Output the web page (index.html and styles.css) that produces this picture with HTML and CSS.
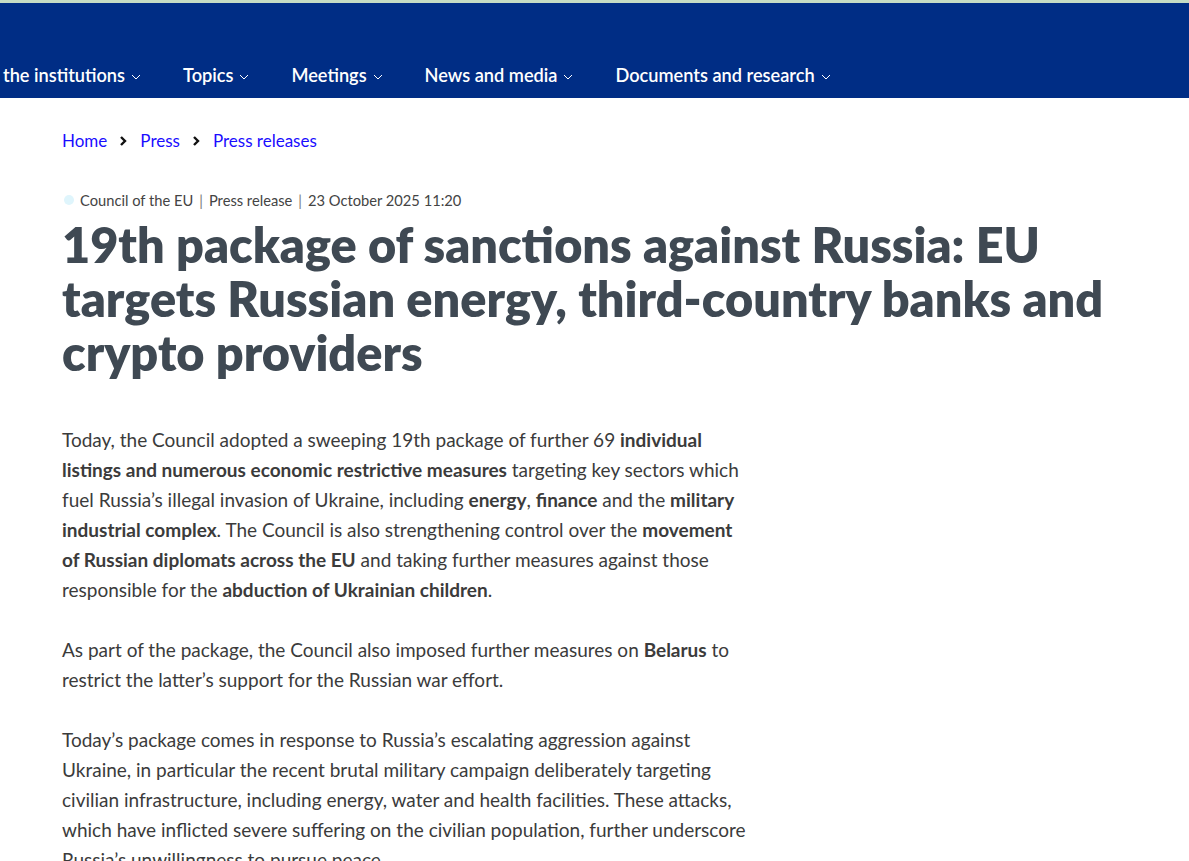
FILE: index.html
```
<!DOCTYPE html>
<html lang="en">
<head>
    <meta charset="UTF-8">
    <title>19th package of sanctions against Russia</title>
    <link rel="stylesheet" href="styles.css">
</head>
<body>
    <div class="topline"></div>
    <nav class="mainnav">
        <ul>
            <li>the institutions <svg class="caret" width="10" height="6" viewBox="0 0 10 6"><polyline points="1,1 5,5 9,1"/></svg></li>
            <li>Topics <svg class="caret" width="10" height="6" viewBox="0 0 10 6"><polyline points="1,1 5,5 9,1"/></svg></li>
            <li>Meetings <svg class="caret" width="10" height="6" viewBox="0 0 10 6"><polyline points="1,1 5,5 9,1"/></svg></li>
            <li>News and media <svg class="caret" width="10" height="6" viewBox="0 0 10 6"><polyline points="1,1 5,5 9,1"/></svg></li>
            <li>Documents and research <svg class="caret" width="10" height="6" viewBox="0 0 10 6"><polyline points="1,1 5,5 9,1"/></svg></li>
        </ul>
    </nav>

    <div id="main">
        <div class="breadcrumb">
            <a href="#">Home</a>
            <svg class="sep" width="9" height="12" viewBox="0 0 9 12"><polyline points="2,2 6,6 2,10"/></svg>
            <a href="#">Press</a>
            <svg class="sep" width="9" height="12" viewBox="0 0 9 12"><polyline points="2,2 6,6 2,10"/></svg>
            <a href="#">Press releases</a>
        </div>

        <div class="meta">
            <span class="dot"></span>
            <span>Council of the EU</span><span class="bar">|</span>
            <span>Press release</span><span class="bar">|</span>
            <span>23 October 2025 11:20</span>
        </div>

        <h1>19th package of sanctions against Russia: EU targets Russian energy, third-country banks and crypto providers</h1>

        <div class="content">
            <p>Today, the Council adopted a sweeping 19th package of further 69 <strong>individual listings and numerous economic restrictive measures</strong> targeting key sectors which fuel Russia’s illegal invasion of Ukraine, including <strong>energy</strong>, <strong>finance</strong> and the <strong>military industrial complex</strong>. The Council is also strengthening control over the <strong>movement of Russian diplomats across the EU</strong> and taking further measures against those responsible for the <strong>abduction of Ukrainian children</strong>.</p>
            <p>As part of the package, the Council also imposed further measures on <strong>Belarus</strong> to restrict the latter’s support for the Russian war effort.</p>
            <p>Today’s package comes in response to Russia’s escalating aggression against Ukraine, in particular the recent brutal military campaign deliberately targeting civilian infrastructure, including energy, water and health facilities. These attacks, which have inflicted severe suffering on the civilian population, further underscore Russia’s unwillingness to pursue peace.</p>
        </div>
    </div>
</body>
</html>
```

FILE: styles.css
```
body{
    margin: 0;
    font-family: Lato, "Noto Sans", sans-serif;
    color: #3b3b3b;
    background: #fff;
}
.topline{
    height: 3px;
    background: #c6dcc4;
}
.mainnav{
    background: #002d85;
    height: 95px;
    ul{
        list-style: none;
        margin: 0;
        padding: 52px 0 0 3px;
        display: flex;
        gap: 42px;
    }
    li{
        color: #fff;
        font-size: 18.2px;
        font-weight: 600;
        line-height: 40px;
        display: flex;
        align-items: center;
        gap: 6px;
    }
    .caret{
        margin-top: 3px;
        fill: none;
        stroke: #fff;
        stroke-width: 1;
    }
}
#main{
    padding-left: 62px;
}
.breadcrumb{
    padding-top: 31px;
    display: flex;
    align-items: center;
    gap: 12px;
    line-height: 24px;
    font-size: 17px;
    a{
        color: #1a0dff;
        text-decoration: none;
    }
    .sep{
        fill: none;
        stroke: #111;
        stroke-width: 2.4;
    }
}
.meta{
    margin-top: 37px;
    display: flex;
    align-items: center;
    font-size: 14.7px;
    line-height: 20px;
    color: #444;
    .dot{
        width: 10px;
        height: 10px;
        border-radius: 50%;
        background: #dff5fc;
        margin: 0 6px 0 2px;
    }
    .bar{
        margin: 0 6px;
        color: #777;
    }
}
h1{
    margin: 7px 0 0;
    max-width: 1090px;
    font-size: 48.6px;
    line-height: 54px;
    font-weight: 800;
    color: #3f4953;
}
.content{
    margin-top: 46px;
    max-width: 690px;
    font-size: 19px;
    line-height: 30px;
    p{
        margin: 0 0 30px;
    }
    strong{
        font-weight: 700;
    }
}
```
